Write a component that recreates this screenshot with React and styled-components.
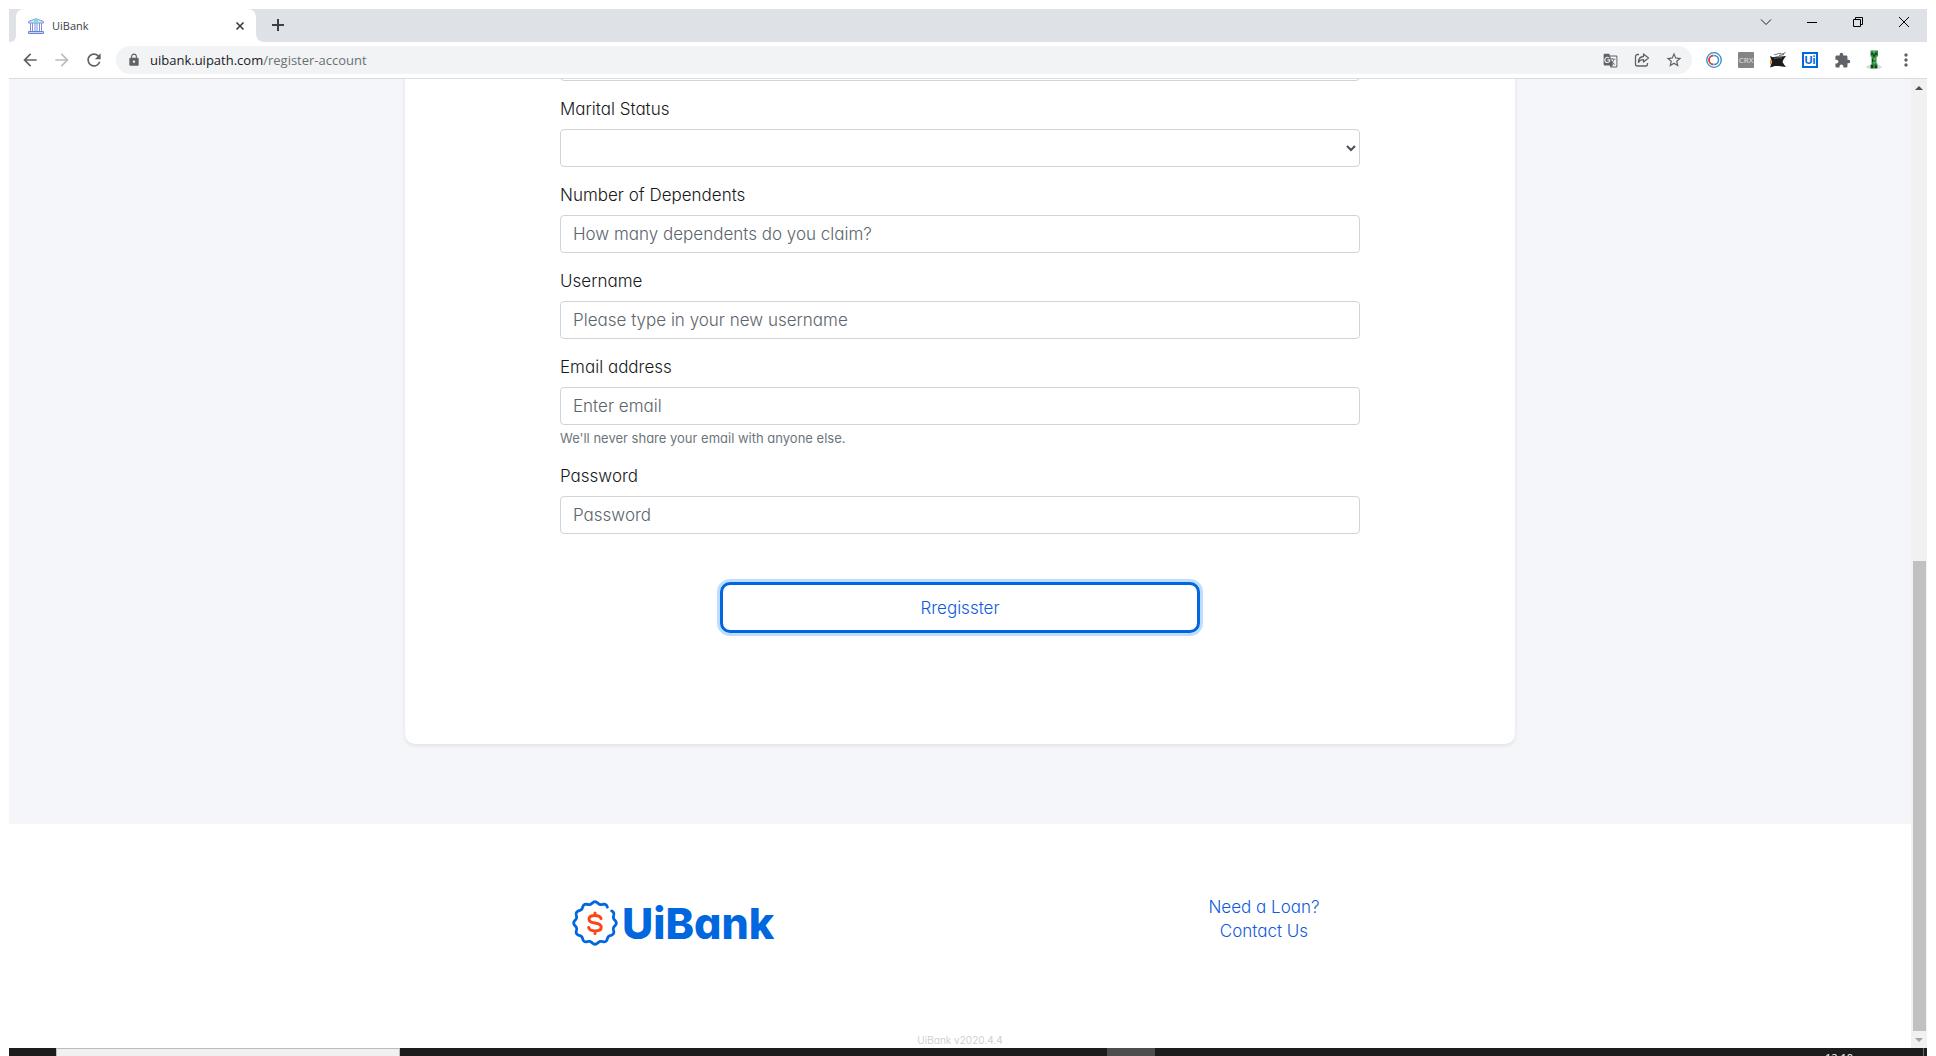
import React from "react";
import styled, { createGlobalStyle } from "styled-components";
import {
  MdArrowBack,
  MdArrowForward,
  MdRefresh,
  MdLock,
  MdGTranslate,
  MdStarBorder,
  MdExtension,
  MdMoreVert,
} from "react-icons/md";

const GlobalStyle = createGlobalStyle`
  *, *::before, *::after { box-sizing: border-box; }
  body { margin: 0; background: #fff; }
  button { font: inherit; }
`;

const chromeFont = `"Open Sans", "Noto Sans", sans-serif`;
const pageFont = `Inter, "Open Sans", sans-serif`;

const Desktop = styled.div`
  display: flex;
  flex-direction: column;
  height: 100vh;
  padding: 9px 9px 0;
  overflow: hidden;
`;

/* ---------- Browser frame ---------- */

const TabStrip = styled.div`
  display: flex;
  flex: none;
  height: 33px;
  font-family: ${chromeFont};
`;

const StripStart = styled.div`
  width: 7px;
  background: #dee1e6;
  border-bottom-right-radius: 6px;
`;

const TabSlot = styled.div`
  width: 240px;
  background: linear-gradient(#dee1e6 50%, #fff 50%);
`;

const Tab = styled.div`
  display: flex;
  align-items: center;
  gap: 8px;
  height: 100%;
  padding: 0 8px 0 12px;
  background: #fff;
  border-radius: 8px 8px 0 0;
`;

const TabTitle = styled.span`
  flex: 1;
  font-size: 11px;
  line-height: 14px;
  color: #3c4043;
`;

const StripRest = styled.div`
  display: flex;
  flex: 1;
  align-items: flex-start;
  justify-content: space-between;
  background: #dee1e6;
  border-bottom-left-radius: 8px;
`;

const IconButton = styled.button`
  display: flex;
  flex: none;
  align-items: center;
  justify-content: center;
  width: ${(p) => p.$w || 32}px;
  height: ${(p) => p.$h || 28}px;
  padding: 0;
  border: 0;
  background: none;
  color: ${(p) => p.$color || "#5f6368"};
`;

const WindowButtons = styled.div`
  display: flex;
`;

const Toolbar = styled.div`
  display: flex;
  flex: none;
  align-items: center;
  gap: 6px;
  height: 37px;
  padding: 0 5px;
  border-bottom: 1px solid #dadce0;
  background: #fff;
  font-family: ${chromeFont};
`;

const ButtonGroup = styled.div`
  display: flex;
`;

const AddressBar = styled.div`
  display: flex;
  flex: 1;
  align-items: center;
  height: 28px;
  padding: 0 2px 0 11px;
  border-radius: 14px;
  background: #f1f3f4;
  color: #5f6368;
`;

const Url = styled.div`
  flex: 1;
  padding-left: 9px;
  font-size: 13px;
  line-height: 20px;
  color: #6b7075;

  b {
    font-weight: 400;
    color: #202124;
  }
`;

const CrxBadge = styled.span`
  width: 16px;
  height: 16px;
  border-radius: 1px;
  background: #848484;
  color: #e4e4e4;
  font-size: 8px;
  line-height: 16px;
`;

const UiBadge = styled.span`
  width: 16px;
  height: 16px;
  border: 2px solid #0067df;
  background: #fff;
  color: #0067df;
  font: 700 11px/12px ${pageFont};
`;

/* ---------- Page ---------- */

const Viewport = styled.div`
  display: flex;
  flex: 1;
  min-height: 0;
`;

const Page = styled.div`
  display: flex;
  flex: 1;
  flex-direction: column;
  justify-content: flex-end;
  overflow: hidden;
  font-family: ${pageFont};
  font-size: 17px;
  font-weight: 300;
  line-height: 24px;
  font-feature-settings: "cv11";
  color: #16191c;
`;

const Main = styled.main`
  flex: none;
  padding: 80px 16px;
  background: #f5f6fa;
`;

const Card = styled.section`
  max-width: 1110px;
  margin: 0 auto;
  padding: 60px 24px 111px;
  border-radius: 10px;
  background: #fff;
  box-shadow: 0 2px 4px rgba(0, 0, 0, 0.08);
`;

const Form = styled.form`
  display: flex;
  flex-direction: column;
  gap: 16px;
  max-width: 800px;
  margin: 0 auto;
`;

const Field = styled.div`
  display: flex;
  flex-direction: column;
`;

const Label = styled.label`
  margin-bottom: 8px;
`;

const Input = styled.input`
  width: 100%;
  height: 38px;
  padding: 6px 12px;
  border: 1px solid #ced4da;
  border-radius: 4px;
  background: #fff;
  color: #495057;
  font: inherit;
  font-feature-settings: inherit;

  &::placeholder {
    color: #5c656d;
    opacity: 1;
  }
`;

const Hint = styled.small`
  margin-top: 4px;
  font-size: 13px;
  font-weight: 400;
  line-height: 19px;
  color: #6c757d;
`;

const RegisterButton = styled.button`
  align-self: center;
  width: 60%;
  height: 51px;
  margin-top: 32px;
  border: 3px solid #0067df;
  border-radius: 10px;
  background: #fff;
  box-shadow: 0 0 0 3px #bfdeff;
  color: #0f5bdc;
  font-feature-settings: inherit;
`;

const Footer = styled.footer`
  display: flex;
  flex: none;
  flex-direction: column;
  align-items: center;
  justify-content: space-between;
  height: 224px;
  padding-top: 71px;
  background: #fff;
`;

const FooterColumns = styled.div`
  display: grid;
  grid-template-columns: 1fr 1fr;
  align-items: start;
  width: 100%;
  max-width: 1216px;
`;

const Brand = styled.div`
  display: flex;
  align-items: center;
  gap: 4px;
  padding: 4px 0 0 220px;
  color: #0067df;
  font-size: 43px;
  font-weight: 800;
  line-height: 48px;
`;

const FooterLinks = styled.nav`
  display: flex;
  flex-direction: column;
  align-items: center;

  a {
    color: #0f5bdc;
    text-decoration: none;
  }
`;

const Version = styled.small`
  font-size: 10px;
  font-weight: 400;
  line-height: 16px;
  color: #d0d0d0;
`;

/* ---------- Scrollbar ---------- */

const Scrollbar = styled.div`
  display: flex;
  flex: none;
  flex-direction: column;
  width: 16px;
  background: #f1f1f1;
`;

const Track = styled.div`
  flex: 465;
`;

const Thumb = styled.div`
  flex: 470;
  margin: 0 1px 0 2px;
  background: #c1c1c1;
`;

/* ---------- Taskbar ---------- */

const Taskbar = styled.div`
  display: flex;
  flex: none;
  height: 8px;
  overflow: hidden;
  background: #1d1d1d;
`;

const StartArea = styled.div`
  width: 47px;
`;

const SearchBox = styled.div`
  width: 344px;
  border: 1px solid #bcbcbc;
  border-bottom: 0;
  background: #f0f0f0;
`;

const TaskItems = styled.div`
  display: flex;
  flex: 1;
  padding-left: 707px;
`;

const ActiveTask = styled.div`
  width: 48px;
  background: #4d4d4d;
`;

const Clock = styled.div`
  padding: 2px 70px 0 0;
  color: #fff;
  font: 11px/16px ${chromeFont};
`;

const DesktopPeek = styled.div`
  width: 4px;
  border-left: 1px solid #6a6a6a;
`;

/* ---------- Drawings ---------- */

const BankIcon = () => (
  <svg width="16" height="16" viewBox="0 0 16 16" fill="none">
    <path d="M0.500 5V3.500L8 0.700l7.500 2.800V5z" fill="#dfe6fb" stroke="#7d93dc" />
    <rect x="6" y="1" width="4" height="4" rx="1" fill="#6fe3dc" />
    <path d="M2.500 5v8M4.500 5v8M7 5v8M9 5v8M11.500 5v8M13.500 5v8" stroke="#7d93dc" />
    <path d="M0.500 15.500v-2h15v2z" fill="#c9d5f8" stroke="#6a83d6" />
  </svg>
);

const Glyph = ({ size = 12, d, width = 1 }) => (
  <svg width={size} height={size} viewBox={`0 0 ${size} ${size}`} fill="none" stroke="currentColor" strokeWidth={width}>
    <path d={d} />
  </svg>
);

const ShareIcon = () => (
  <svg width="16" height="16" viewBox="0 0 16 16" fill="none" stroke="currentColor" strokeWidth="1.300" strokeLinejoin="round">
    <path d="M5 2.500H3.500a2 2 0 0 0-2 2v7.500a2 2 0 0 0 2 2h8a2 2 0 0 0 2-2v-1" />
    <path d="M9.500 2l5 4-5 4V7.700c-2.500 0-4 .8-5 2.800 0-3.500 2-5.800 5-6z" />
  </svg>
);

const RingsIcon = () => (
  <svg width="16" height="16" viewBox="0 0 16 16" fill="none">
    <circle cx="8" cy="8" r="7.300" stroke="#2f8fc6" strokeWidth="1.300" />
    <path d="M8 3.500a4.500 4.500 0 0 1 0 9" stroke="#2f8fc6" strokeWidth="1.500" />
    <path d="M7.500 3.500a4.500 4.500 0 0 0 0 9" stroke="#d6403a" strokeWidth="1.800" />
  </svg>
);

const BeastIcon = () => (
  <svg width="16" height="16" viewBox="0 0 16 16">
    <path d="M4 2c2 2 4-1.500 6-.5S13 2 15.500.5M9 3.500c2 0 3-1 5-1" fill="none" stroke="#555" strokeWidth="0.900" />
    <path d="M0 4l3 1.200 4-.7h4l5-.5-2.500 3.500L12.500 10l1.500 2.500 2 2.500-4-.6-3-.4H5l-5 1.500L2 10z" fill="#1b1b1b" />
    <path d="M4 6.500c3-.8 5-.8 8-.5" fill="none" stroke="#777" strokeWidth="0.800" />
    <path d="M0 7l2 3-2 3z" fill="#f08a1d" />
  </svg>
);

const CreeperIcon = () => (
  <svg width="16" height="20" viewBox="0 0 16 20">
    <ellipse cx="8" cy="17" rx="8" ry="2.200" fill="#dadada" />
    <path d="M4.500 0.500h7.500v6h-1.500v7h1v5h-7v-4h1v-8h-1z" fill="#2d8a3c" />
    <path d="M5 3h2v1.500H5zM9 3h2v1.500H9zM7 4.500h2v2H7zM6 9h1v3H6zM5 15h2v3H5zM9 15.500h2v2.500H9z" fill="#123d1b" />
    <path d="M8 8h1.500v2H8zM7.500 12h2v1.500h-2zM7 1h2v1.500H7z" fill="#5cc06a" />
  </svg>
);

/* Twelve-lobed seal, open at the upper right. */
const sealPath = (() => {
  const points = [];
  for (let deg = 54; deg <= 398; deg += 2) {
    const t = (deg * Math.PI) / 180;
    const r = 20.2 + 1.1 * Math.cos(12 * t);
    points.push(`${(23 + r * Math.sin(t)).toFixed(2)} ${(23 - r * Math.cos(t)).toFixed(2)}`);
  }
  return `M${points.join("L")}`;
})();

const SealLogo = () => (
  <svg width="46" height="46" viewBox="0 0 46 46" fill="none" strokeLinecap="round" strokeLinejoin="round">
    <path d={sealPath} stroke="#0067df" strokeWidth="2.800" />
    <path
      d="M29 18.500C28.300 16.300 26 15.500 23 15.500c-3.600 0-6 1.300-6 3.700 0 2.700 2.600 3.300 6 3.900s6.200 1.300 6.200 4.100c0 2.400-2.600 3.700-6.200 3.700-3.300 0-5.700-1-6.300-3.400M23 13v2.500M23 31v2.500"
      stroke="#fa4616"
      strokeWidth="3"
    />
  </svg>
);

const Arrow = ({ up }) => (
  <svg width="8" height="4" viewBox="0 0 8 4" fill="currentColor">
    <path d={up ? "M0 4l4-4 4 4z" : "M0 0l4 4 4-4z"} />
  </svg>
);

const fields = [
  { id: "dependents", label: "Number of Dependents", placeholder: "How many dependents do you claim?" },
  { id: "username", label: "Username", placeholder: "Please type in your new username" },
  {
    id: "email",
    label: "Email address",
    placeholder: "Enter email",
    type: "email",
    hint: "We'll never share your email with anyone else.",
  },
  { id: "password", label: "Password", placeholder: "Password", type: "password" },
];

export default function App() {
  return (
    <Desktop>
      <GlobalStyle />
      <TabStrip>
        <StripStart />
        <TabSlot>
          <Tab>
            <BankIcon />
            <TabTitle>UiBank</TabTitle>
            <IconButton $w={16} $h={16} $color="#3c4043" aria-label="Close tab">
              <Glyph size={10} d="M1.500 1.500l7 7M8.500 1.500l-7 7" width={1.700} />
            </IconButton>
          </Tab>
        </TabSlot>
        <StripRest>
          <IconButton $w={44} $h={32} $color="#3c4043" aria-label="New tab">
            <Glyph size={12} d="M6 0v12M0 6h12" width={2} />
          </IconButton>
          <WindowButtons>
            <IconButton $w={46} $h={26} $color="#222" aria-label="Search tabs">
              <Glyph d="M1 3.500l5 5 5-5" />
            </IconButton>
            <IconButton $w={46} $h={26} $color="#000" aria-label="Minimize">
              <Glyph size={10} d="M0 5.500h10" />
            </IconButton>
            <IconButton $w={46} $h={26} $color="#000" aria-label="Restore">
              <Glyph size={10} d="M0.500 2.500h7v7h-7zM2.500 2.500v-2h7v7h-2" />
            </IconButton>
            <IconButton $w={46} $h={26} $color="#000" aria-label="Close">
              <Glyph size={10} d="M0 0l10 10M10 0L0 10" />
            </IconButton>
          </WindowButtons>
        </StripRest>
      </TabStrip>

      <Toolbar>
        <ButtonGroup>
          <IconButton aria-label="Back"><MdArrowBack size={20} /></IconButton>
          <IconButton $color="#babcbe" aria-label="Forward"><MdArrowForward size={20} /></IconButton>
          <IconButton aria-label="Reload"><MdRefresh size={20} /></IconButton>
        </ButtonGroup>
        <AddressBar>
          <MdLock size={14} />
          <Url><b>uibank.uipath.com</b>/register-account</Url>
          <IconButton aria-label="Translate"><MdGTranslate size={15} /></IconButton>
          <IconButton aria-label="Share"><ShareIcon /></IconButton>
          <IconButton aria-label="Bookmark"><MdStarBorder size={18} /></IconButton>
        </AddressBar>
        <ButtonGroup>
          <IconButton aria-label="Rings extension"><RingsIcon /></IconButton>
          <IconButton><CrxBadge>CRX</CrxBadge></IconButton>
          <IconButton aria-label="Beast extension"><BeastIcon /></IconButton>
          <IconButton><UiBadge>Ui</UiBadge></IconButton>
          <IconButton aria-label="Extensions"><MdExtension size={17} /></IconButton>
          <IconButton aria-label="Profile"><CreeperIcon /></IconButton>
          <IconButton aria-label="Menu"><MdMoreVert size={20} /></IconButton>
        </ButtonGroup>
      </Toolbar>

      <Viewport>
        <Page>
          <Main>
            <Card>
              <Form>
                <Field>
                  <Input as="select" aria-label="Gender" />
                </Field>
                <Field>
                  <Label htmlFor="marital">Marital Status</Label>
                  <Input as="select" id="marital" />
                </Field>
                {fields.map(({ id, label, placeholder, type = "text", hint }) => (
                  <Field key={id}>
                    <Label htmlFor={id}>{label}</Label>
                    <Input id={id} type={type} placeholder={placeholder} />
                    {hint && <Hint>{hint}</Hint>}
                  </Field>
                ))}
                <RegisterButton type="button">Rregisster</RegisterButton>
              </Form>
            </Card>
          </Main>
          <Footer>
            <FooterColumns>
              <Brand>
                <SealLogo />
                <span>UiBank</span>
              </Brand>
              <FooterLinks>
                <a href="#loan">Need a Loan?</a>
                <a href="#contact">Contact Us</a>
              </FooterLinks>
            </FooterColumns>
            <Version>UiBank v2020.4.4</Version>
          </Footer>
        </Page>
        <Scrollbar>
          <IconButton $w={16} $h={17} $color="#505050" aria-label="Scroll up"><Arrow up /></IconButton>
          <Track />
          <Thumb />
          <IconButton $w={16} $h={17} $color="#a3a3a3" aria-label="Scroll down"><Arrow /></IconButton>
        </Scrollbar>
      </Viewport>

      <Taskbar>
        <StartArea />
        <SearchBox />
        <TaskItems>
          <ActiveTask />
        </TaskItems>
        <Clock>12:10</Clock>
        <DesktopPeek />
      </Taskbar>
    </Desktop>
  );
}
